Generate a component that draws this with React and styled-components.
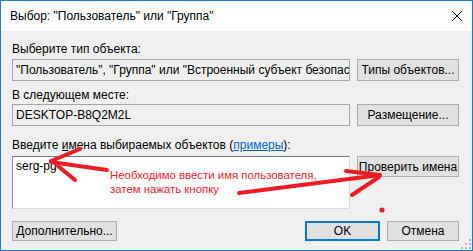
import React from 'react'
import styled, { createGlobalStyle } from 'styled-components'

const GlobalStyle = createGlobalStyle`
    html, body {
        margin: 0;
        padding: 0;
        background: #f0f0f0;
    }
    * {
        box-sizing: border-box;
    }
`;

const Window = styled.div`
    position: relative;
    width: 473px;
    height: 251px;
    border: 1px solid #1a7ad4;
    display: flex;
    flex-direction: column;
    font-family: "Liberation Sans", Arial, sans-serif;
    font-size: 12px;
    color: #000;
    background: #f0f0f0;
    overflow: hidden;
`;
const TitleBar = styled.div`
    height: 30px;
    flex: none;
    background: #fff;
    display: flex;
    align-items: center;
    justify-content: space-between;
    padding: 0 9px 0 9px;
`;
const Title = styled.span`
    font-size: 12px;
    line-height: 15px;
`;
const Body = styled.div`
    flex: 1;
    display: flex;
    flex-direction: column;
    padding: 11px 13px 0 11px;
`;
const FieldLabel = styled.div`
    line-height: 15px;
    height: 15px;
    margin-top: ${p => p.$top || 0}px;
    white-space: nowrap;
`;
const Row = styled.div`
    display: flex;
    align-items: flex-start;
    justify-content: space-between;
    margin-top: ${p => p.$top || 0}px;
`;
const TextBox = styled.div`
    width: 338px;
    height: ${p => p.$h || 22}px;
    border: 1px solid #a6a6a6;
    background: ${p => p.$white ? '#fff' : '#f0f0f0'};
    padding: ${p => p.$multi ? '2px 3px' : '0 3px'};
    line-height: ${p => p.$multi ? '15px' : '20px'};
    white-space: nowrap;
    overflow: hidden;
    ${p => p.$white && `
        border-color: #7a7a7a #dcdcdc #dcdcdc #8a8a8a;
    `}
`;
const Button = styled.div`
    width: ${p => p.$w || 102}px;
    height: ${p => p.$h || 22}px;
    background: #e1e1e1;
    border: 1px solid ${p => p.$default ? '#0078d7' : '#adadad'};
    box-shadow: ${p => p.$default ? 'inset 0 0 0 1px #0078d7' : 'none'};
    display: flex;
    align-items: center;
    justify-content: center;
    white-space: nowrap;
`;
const Footer = styled.div`
    display: flex;
    align-items: center;
    margin-top: 12px;
    gap: 7px;
`;
const Spacer = styled.div`
    flex: 1;
`;
const Accel = styled.span`
    text-decoration: underline;
`;
const Link = styled.span`
    color: #0066cc;
    text-decoration: underline;
`;
const Overlay = styled.svg`
    position: absolute;
    left: -1px;
    top: -1px;
    pointer-events: none;
`;
const Note = styled.div`
    position: absolute;
    left: 109px;
    top: 167px;
    color: #ec1c2c;
    font-size: 11.4px;
    line-height: 14px;
    white-space: nowrap;
`;
const Grip = styled.svg`
    position: absolute;
    right: 1px;
    bottom: 1px;
`;

function CloseIcon() {
    return (
        <svg width="12" height="12" viewBox="0 0 12 12">
            <path d="M1 1 L11 11 M11 1 L1 11" stroke="#000" strokeWidth="1" fill="none" />
        </svg>
    )
}

function App() {
    return (
        <>
            <GlobalStyle />
            <Window>
                <TitleBar>
                    <Title>Выбор: "Пользователь" или "Группа"</Title>
                    <CloseIcon />
                </TitleBar>
                <Body>
                    <FieldLabel>Выберите тип объекта:</FieldLabel>
                    <Row $top={2}>
                        <TextBox>"Пользователь", "Группа" или "Встроенный субъект безопас</TextBox>
                        <Button>Типы объектов...</Button>
                    </Row>
                    <FieldLabel $top={7}>В следующем месте:</FieldLabel>
                    <Row $top={1}>
                        <TextBox>DESKTOP-B8Q2M2L</TextBox>
                        <Button>Размещение...</Button>
                    </Row>
                    <FieldLabel $top={12}>
                        Введите <Accel>и</Accel>мена выбираемых объектов (<Link>примеры</Link>):
                    </FieldLabel>
                    <Row $top={3}>
                        <TextBox $white $multi $h={53}>serg-pg</TextBox>
                        <Button $h={21}>Проверить имена</Button>
                    </Row>
                    <Footer>
                        <Button $w={105} $h={20}>Дополнительно...</Button>
                        <Spacer />
                        <Button $w={75} $h={20} $default>OK</Button>
                        <Button $w={72} $h={20}>Отмена</Button>
                    </Footer>
                </Body>

                <Note>
                    Необходимо ввести имя пользователя,<br />
                    затем нажать кнопку
                </Note>

                <Overlay width="473" height="251" viewBox="0 0 473 251">
                    <g stroke="#ec1c24" strokeWidth="4" strokeLinecap="round" fill="none">
                        <path d="M51 161 L80 149" />
                        <path d="M51 162 L107 170" />
                        <path d="M58 166 L75 180" />
                        <path d="M239 193 L380 175" />
                        <path d="M346 171 L380 175" />
                        <path d="M352 195 L379 177" />
                    </g>
                    <circle cx="382" cy="210" r="2.6" fill="#ec1c24" />
                </Overlay>

                <Grip width="10" height="10" viewBox="0 0 10 10">
                    <g fill="#b9b9b9">
                        <rect x="8" y="0" width="2" height="2" />
                        <rect x="4" y="4" width="2" height="2" />
                        <rect x="8" y="4" width="2" height="2" />
                        <rect x="0" y="8" width="2" height="2" />
                        <rect x="4" y="8" width="2" height="2" />
                        <rect x="8" y="8" width="2" height="2" />
                    </g>
                </Grip>
            </Window>
        </>
    )
}

export default App
